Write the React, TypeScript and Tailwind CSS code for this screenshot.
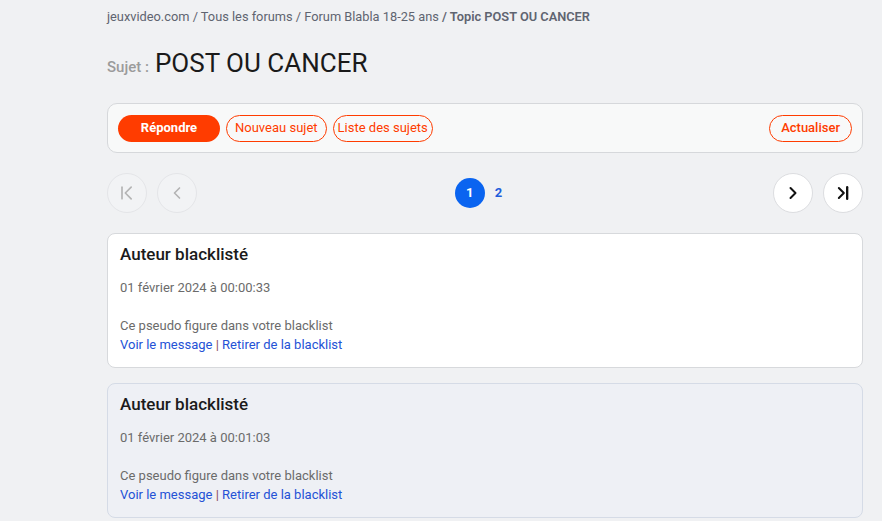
import { ChevronLeft, ChevronRight } from 'lucide-react'

type Post = {
  id: number
  date: string
  alt: boolean
}

const posts: Post[] = [
  { id: 1, date: '01 février 2024 à 00:00:33', alt: false },
  { id: 2, date: '01 février 2024 à 00:01:03', alt: true },
]

const FirstIcon = ({ className }: { className?: string }) => (
  <svg className={className} viewBox="0 0 24 24" fill="none" stroke="currentColor" strokeWidth={2} strokeLinecap="round" strokeLinejoin="round">
    <path d="M6 5v14" />
    <path d="M17 5l-7 7 7 7" />
  </svg>
)

const LastIcon = ({ className }: { className?: string }) => (
  <svg className={className} viewBox="0 0 24 24" fill="none" stroke="currentColor" strokeWidth={2.4} strokeLinecap="round" strokeLinejoin="round">
    <path d="M7 6l6 6-6 6" />
    <path d="M17 5v14" strokeWidth={2.8} />
  </svg>
)

const PostCard = ({ post }: { post: Post }) => (
  <div
    className={
      post.alt
        ? 'rounded-lg border border-[#d5dbe6] bg-[#eef0f5] px-3 pt-[9px] pb-[13px]'
        : 'rounded-lg border border-[#d7d9dc] bg-white px-3 pt-[9px] pb-[13px]'
    }
  >
    <div className="text-[17px] font-medium text-[#1b1b1b] leading-[22px]">Auteur blacklisté</div>
    <div className="mt-[15px] text-[13px] text-[#6b6b6b] leading-[16px]">{post.date}</div>
    <div className="mt-[20px] text-[13px] text-[#6b6b6b] leading-[19px]">Ce pseudo figure dans votre blacklist</div>
    <div className="text-[13px] leading-[19px]">
      <a className="text-[#2452d6]">Voir le message</a>
      <span className="text-[#8a4a5a]"> | </span>
      <a className="text-[#2452d6]">Retirer de la blacklist</a>
    </div>
  </div>
)

const App = () => {
  return (
    <div className="min-h-screen bg-[#f0f1f3] font-['Roboto',sans-serif]">
      <div className="ml-[107px] w-[756px]">
        {/* Breadcrumb */}
        <div className="pt-[8px] text-[12.8px] leading-[18px] text-[#5f6470]">
          jeuxvideo.com / Tous les forums / Forum Blabla 18-25 ans{' '}
          <span className="font-semibold">/ Topic POST OU CANCER</span>
        </div>

        {/* Title */}
        <div className="mt-[20px] flex items-baseline gap-[6px]">
          <span className="text-[15px] font-medium text-[#9b9b9b]">Sujet :</span>
          <h1 className="text-[26px] font-normal leading-[34px] text-[#1a1a1a]">POST OU CANCER</h1>
        </div>

        {/* Toolbar */}
        <div className="mt-[23px] flex h-[50px] items-center gap-[6px] rounded-[10px] border border-[#d6d8db] bg-[#f8f9f9] px-[10px]">
          <button className="h-[27px] w-[102px] rounded-full bg-[#ff3c00] text-[13px] font-bold text-white">Répondre</button>
          <button className="h-[27px] rounded-full border border-[#ff3c00] px-[8px] text-[13px] font-normal text-[#ff3c00]">Nouveau sujet</button>
          <button className="h-[27px] rounded-full border border-[#ff3c00] px-[4px] text-[13px] font-normal text-[#ff3c00]">Liste des sujets</button>
          <button className="ml-auto h-[27px] rounded-full border border-[#ff3c00] px-[11px] text-[13px] font-medium text-[#ff3c00]">Actualiser</button>
        </div>

        {/* Pagination */}
        <div className="mt-[20px] flex items-center">
          <div className="flex gap-[10px]">
            <button className="flex h-[40px] w-[40px] items-center justify-center rounded-full border border-[#e4e5e8] bg-[#f2f3f5] text-[#b4b4b4]">
              <FirstIcon className="h-[20px] w-[20px]" />
            </button>
            <button className="flex h-[40px] w-[40px] items-center justify-center rounded-full border border-[#e4e5e8] bg-[#f2f3f5] text-[#b4b4b4]">
              <ChevronLeft className="h-[20px] w-[20px]" strokeWidth={2} />
            </button>
          </div>
          <div className="flex flex-1 items-center justify-center gap-[6px] pr-[9px]">
            <span className="flex h-[30px] w-[30px] items-center justify-center rounded-full bg-[#0a64f0] text-[13px] font-bold text-white">1</span>
            <span className="px-[4px] text-[13px] font-bold text-[#1f5ddb]">2</span>
          </div>
          <div className="flex gap-[10px]">
            <button className="flex h-[40px] w-[40px] items-center justify-center rounded-full border border-[#dcdde0] bg-white text-[#111]">
              <ChevronRight className="h-[20px] w-[20px]" strokeWidth={2.4} />
            </button>
            <button className="flex h-[40px] w-[40px] items-center justify-center rounded-full border border-[#dcdde0] bg-white text-[#111]">
              <LastIcon className="h-[20px] w-[20px]" />
            </button>
          </div>
        </div>

        {/* Posts */}
        <div className="mt-[20px] flex flex-col gap-[15px]">
          {posts.map((p) => (
            <PostCard key={p.id} post={p} />
          ))}
        </div>
      </div>
    </div>
  )
}

export default App
